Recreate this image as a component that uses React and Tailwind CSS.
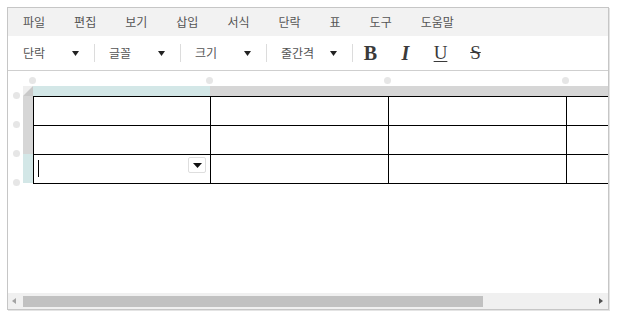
import React from 'react';

const menus = ['파일', '편집', '보기', '삽입', '서식', '단락', '표', '도구', '도움말'];
const selects = ['단락', '글꼴', '크기', '줄간격'];

const Row = ({ children }) => (
  <div className="flex border-b border-black">
    {[177, 178, 178, 178].map((w, i) => (
      <div key={i} className="relative h-[28px] shrink-0 border-r border-black" style={{ width: w }}>
        {i === 0 && children}
      </div>
    ))}
  </div>
);

const Caret = () => (
  <svg width="7" height="6" viewBox="0 0 7 6" className="shrink-0">
    <polygon points="0,1 7,1 3.5,6" fill="#222" />
  </svg>
);

const App = () => {
  return (
    <div className="w-[617px] h-[314px] bg-white pt-[7px] pl-[7px]" style={{ fontFamily: '"Noto Sans CJK KR", "Noto Sans", sans-serif' }}>
      <div className="w-[602px] h-[303px] border border-[#c6c6c6] shadow-[1px_1px_0_#e4e4e4] flex flex-col overflow-hidden">
        {/* menu bar */}
        <div className="h-[28px] bg-[#f2f2f2] flex items-center pl-[15px] gap-[29px] text-[12px] text-[#555] shrink-0">
          {menus.map((m) => (
            <span key={m}>{m}</span>
          ))}
        </div>

        {/* toolbar */}
        <div className="h-[35px] bg-white border-b border-[#cfcfcf] shadow-[0_1px_0_#ececec] flex items-center pl-[15px] text-[12px] text-[#555] shrink-0">
          {selects.map((s) => (
            <div key={s} className="flex items-center">
              <span className="w-[49px]">{s}</span>
              <Caret />
              <span className="ml-[15px] mr-[14px] w-px h-[18px] bg-[#dcdcdc]" />
            </div>
          ))}
          <div className="flex items-center -ml-[14px] text-[#3a3a3a]" style={{ fontFamily: '"Liberation Serif", serif' }}>
            <span className="w-[35px] text-center text-[20px] font-bold">B</span>
            <span className="w-[35px] text-center text-[20px] font-bold italic">I</span>
            <span className="w-[35px] text-center text-[19px] underline underline-offset-2">U</span>
            <span className="w-[35px] text-center text-[19px] line-through">S</span>
          </div>
        </div>

        {/* editing area */}
        <div className="relative flex-1 bg-white overflow-hidden pt-[15px] pl-[15px]">
          <span className="absolute top-[6px] left-[21px] w-[7px] h-[7px] rounded-full bg-[#e6e6e6]" />
          <span className="absolute top-[6px] left-[198px] w-[7px] h-[7px] rounded-full bg-[#e6e6e6]" />
          <span className="absolute top-[6px] left-[376px] w-[7px] h-[7px] rounded-full bg-[#e6e6e6]" />
          <span className="absolute top-[6px] left-[554px] w-[7px] h-[7px] rounded-full bg-[#e6e6e6]" />
          <span className="absolute top-[21px] left-[5px] w-[7px] h-[7px] rounded-full bg-[#e6e6e6]" />
          <span className="absolute top-[50px] left-[5px] w-[7px] h-[7px] rounded-full bg-[#e6e6e6]" />
          <span className="absolute top-[79px] left-[5px] w-[7px] h-[7px] rounded-full bg-[#e6e6e6]" />
          <span className="absolute top-[108px] left-[5px] w-[7px] h-[7px] rounded-full bg-[#e6e6e6]" />

          {/* column header */}
          <div className="flex h-[10px]">
            <svg width="10" height="10" className="shrink-0">
              <rect width="10" height="10" fill="#efefef" />
              <polygon points="10,0 10,10 0,10" fill="#c9c9c9" />
            </svg>
            <div className="w-[177px] shrink-0 bg-[#d3e7e7]" />
            <div className="flex-1 bg-[#d6d6d6]" />
          </div>

          <div className="flex">
            {/* row header */}
            <div className="w-[10px] shrink-0 flex flex-col">
              <div className="h-[58px] bg-[#d6d6d6]" />
              <div className="h-[29px] bg-[#d3e7e7]" />
            </div>
            {/* table */}
            <div className="border-l border-t border-black">
              <Row />
              <Row />
              <Row>
                <span className="absolute left-[4px] top-[5px] w-px h-[17px] bg-black" />
                <span className="absolute right-[4px] top-[2px] w-[18px] h-[16px] border border-[#dedede] rounded-[2px] bg-white flex items-center justify-center">
                  <svg width="9" height="5" viewBox="0 0 9 5">
                    <polygon points="0,0 9,0 4.5,5" fill="#111" />
                  </svg>
                </span>
              </Row>
            </div>
          </div>
        </div>

        {/* horizontal scrollbar */}
        <div className="h-[16px] bg-[#f0f0f0] flex items-center shrink-0">
          <svg width="15" height="16" className="shrink-0">
            <polygon points="8,5 4,8 8,11" fill="#a3a3a3" />
          </svg>
          <div className="w-[460px] h-[11px] mt-[1px] bg-[#c1c1c1]" />
          <div className="flex-1" />
          <svg width="15" height="16" className="shrink-0">
            <polygon points="6,5 10,8 6,11" fill="#505050" />
          </svg>
        </div>
      </div>
    </div>
  );
};

export default App;
